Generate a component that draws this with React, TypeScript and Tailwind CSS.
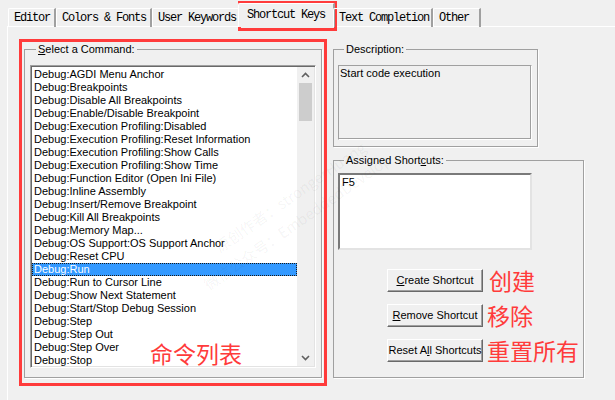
import React from 'react';

const commands = [
  'Debug:AGDI Menu Anchor',
  'Debug:Breakpoints',
  'Debug:Disable All Breakpoints',
  'Debug:Enable/Disable Breakpoint',
  'Debug:Execution Profiling:Disabled',
  'Debug:Execution Profiling:Reset Information',
  'Debug:Execution Profiling:Show Calls',
  'Debug:Execution Profiling:Show Time',
  'Debug:Function Editor (Open Ini File)',
  'Debug:Inline Assembly',
  'Debug:Insert/Remove Breakpoint',
  'Debug:Kill All Breakpoints',
  'Debug:Memory Map...',
  'Debug:OS Support:OS Support Anchor',
  'Debug:Reset CPU',
  'Debug:Run',
  'Debug:Run to Cursor Line',
  'Debug:Show Next Statement',
  'Debug:Start/Stop Debug Session',
  'Debug:Step',
  'Debug:Step Out',
  'Debug:Step Over',
  'Debug:Stop',
];

const tabs = [
  { label: 'Editor', w: 'w-[48px]' },
  { label: 'Colors & Fonts', w: 'w-[96px]' },
  { label: 'User Keywords', w: 'w-[88px]' },
  { label: 'Shortcut Keys', w: 'w-[97px]', active: true },
  { label: 'Text Completion', w: 'w-[100px]' },
  { label: 'Other', w: 'w-[48px]' },
];

const mono = { fontFamily: '"Liberation Mono", "DejaVu Sans Mono", monospace' };
const cjk = { fontFamily: '"Noto Sans CJK SC", "Noto Sans", sans-serif' };

const WinButton = ({ children }: { children: React.ReactNode }) => (
  <div className="w-[96px] h-[23px] flex items-center justify-center bg-[#f0f0f0] border border-t-white border-l-white border-r-[#696969] border-b-[#696969] shadow-[inset_-1px_-1px_0_#a0a0a0] text-black whitespace-nowrap">
    {children}
  </div>
);

const Note = ({ children }: { children: React.ReactNode }) => (
  <span className="text-[23px] leading-none text-[#ff3b3b] whitespace-nowrap" style={cjk}>
    {children}
  </span>
);

export default function App() {
  return (
    <div
      className="w-[615px] h-[400px] bg-[#f0f0f0] relative overflow-hidden text-[11px] leading-[13px] text-black"
      style={{ fontFamily: '"Liberation Sans", Arial, sans-serif' }}
    >
      {/* tab strip */}
      <div className="flex items-end h-[27px] pl-[8px] relative z-10">
        {tabs.map((t) =>
          t.active ? (
            <div
              key={t.label}
              className={`${t.w} -mx-[2px] h-[24px] bg-[#f0f0f0] border-t border-l border-white border-r-2 border-r-[#a0a0a0] pl-[8px] pt-[5px] text-[12px] leading-[13px] tracking-[-1.2px] rounded-tl-[2px]`}
              style={mono}
            >
              {t.label}
            </div>
          ) : (
            <div
              key={t.label}
              className={`${t.w} h-[19px] border-t border-l border-white border-r-2 border-r-[#a0a0a0] pl-[5px] pt-[3px] text-[12px] leading-[13px] tracking-[-1.2px] rounded-tl-[2px]`}
              style={mono}
            >
              {t.label}
            </div>
          )
        )}
      </div>

      {/* tab page */}
      <div className="ml-[7px] -mt-px h-[380px] border-t border-l border-white pl-[16px] pt-[16px] flex items-start">
        {/* Select a Command */}
        <fieldset className="w-[298px] h-[335px] border border-[#a0a0a0] shadow-[1px_1px_0_white] px-[5px] pt-[9px]">
          <legend className="ml-[6px] px-[2px]">
            <span className="underline">S</span>elect a Command:
          </legend>
          <div className="w-[286px] h-[303px] flex border border-t-[#a0a0a0] border-l-[#a0a0a0] border-r-white border-b-white shadow-[inset_1px_1px_0_#696969,inset_-1px_-1px_0_#e3e3e3] bg-white p-[1px]">
            <div className="flex-1 pt-px">
              {commands.map((c) => (
                <div
                  key={c}
                  className={
                    c === 'Debug:Run'
                      ? 'h-[13px] pl-[2px] bg-[#3399ff] text-white outline outline-1 outline-dotted outline-[#1a1a1a] -outline-offset-1 whitespace-nowrap'
                      : 'h-[13px] pl-[2px] whitespace-nowrap'
                  }
                >
                  {c}
                </div>
              ))}
            </div>
            <div className="w-[17px] bg-[#f0f0f0] flex flex-col items-center">
              <div className="h-[16px] flex items-center justify-center">
                <svg width="9" height="6" viewBox="0 0 9 6">
                  <polyline points="1,5 4.5,1.5 8,5" fill="none" stroke="#606060" strokeWidth="1.6" />
                </svg>
              </div>
              <div className="w-[13px] h-[38px] bg-[#cdcdcd]" />
              <div className="flex-1" />
              <div className="h-[16px] flex items-center justify-center">
                <svg width="9" height="6" viewBox="0 0 9 6">
                  <polyline points="1,1 4.5,4.5 8,1" fill="none" stroke="#606060" strokeWidth="1.6" />
                </svg>
              </div>
            </div>
          </div>
        </fieldset>

        {/* right column */}
        <div className="ml-[11px] flex flex-col">
          <fieldset className="w-[205px] h-[104px] border border-[#a0a0a0] shadow-[1px_1px_0_white] px-[4px] pt-[9px]">
            <legend className="ml-[6px] px-[2px]">Description:</legend>
            <div className="w-[194px] h-[75px] border border-[#a0a0a0] border-r-white border-b-white shadow-[inset_-1px_-1px_0_#a0a0a0] pl-px pt-px">
              Start code execution
            </div>
          </fieldset>

          <fieldset className="mt-[7px] w-[205px] h-[224px] border border-[#a0a0a0] shadow-[1px_1px_0_white] px-[4px] pt-[6px]">
            <legend className="ml-[6px] px-[2px]">
              Assigned Short<span className="underline">c</span>uts:
            </legend>
            <div className="w-[194px] h-[77px] bg-white border-2 border-t-[#7a7a7a] border-l-[#7a7a7a] border-r-[#e3e3e3] border-b-[#e3e3e3] pl-[2px] pt-[1px]">
              F5
            </div>

            <div className="ml-[49px] mt-[19px] flex flex-col gap-[12px]">
              <div className="flex items-center gap-[6px]">
                <WinButton>
                  <span className="underline">C</span>reate Shortcut
                </WinButton>
                <Note>创建</Note>
              </div>
              <div className="flex items-center gap-[4px]">
                <WinButton>
                  <span className="underline">R</span>emove Shortcut
                </WinButton>
                <Note>移除</Note>
              </div>
              <div className="flex items-center gap-[4px]">
                <WinButton>
                  Reset A<span className="underline">l</span>l Shortcuts
                </WinButton>
                <Note>重置所有</Note>
              </div>
            </div>
          </fieldset>
        </div>
      </div>

      {/* faint watermark over the dialog */}
      <div
        className="absolute left-[200px] top-[190px] -rotate-[35deg] text-[15px] text-[#000]/[0.05] whitespace-nowrap pointer-events-none"
        style={cjk}
      >
        原创作者：strongerHuang
      </div>
      <div
        className="absolute left-[185px] top-[215px] -rotate-[35deg] text-[15px] text-[#000]/[0.05] whitespace-nowrap pointer-events-none"
        style={cjk}
      >
        微信公众号：EmbeddedDevelop
      </div>

      {/* annotations */}
      <div className="absolute left-[238px] top-[1px] w-[99px] h-[30px] border-[3px] border-[#ff3b3b] pointer-events-none" />
      <div className="absolute left-[19px] top-[39px] w-[308px] h-[347px] border-[3px] border-[#ff3b3b] pointer-events-none" />
      <div className="absolute left-[150px] top-[342px] pointer-events-none">
        <Note>命令列表</Note>
      </div>
    </div>
  );
}
